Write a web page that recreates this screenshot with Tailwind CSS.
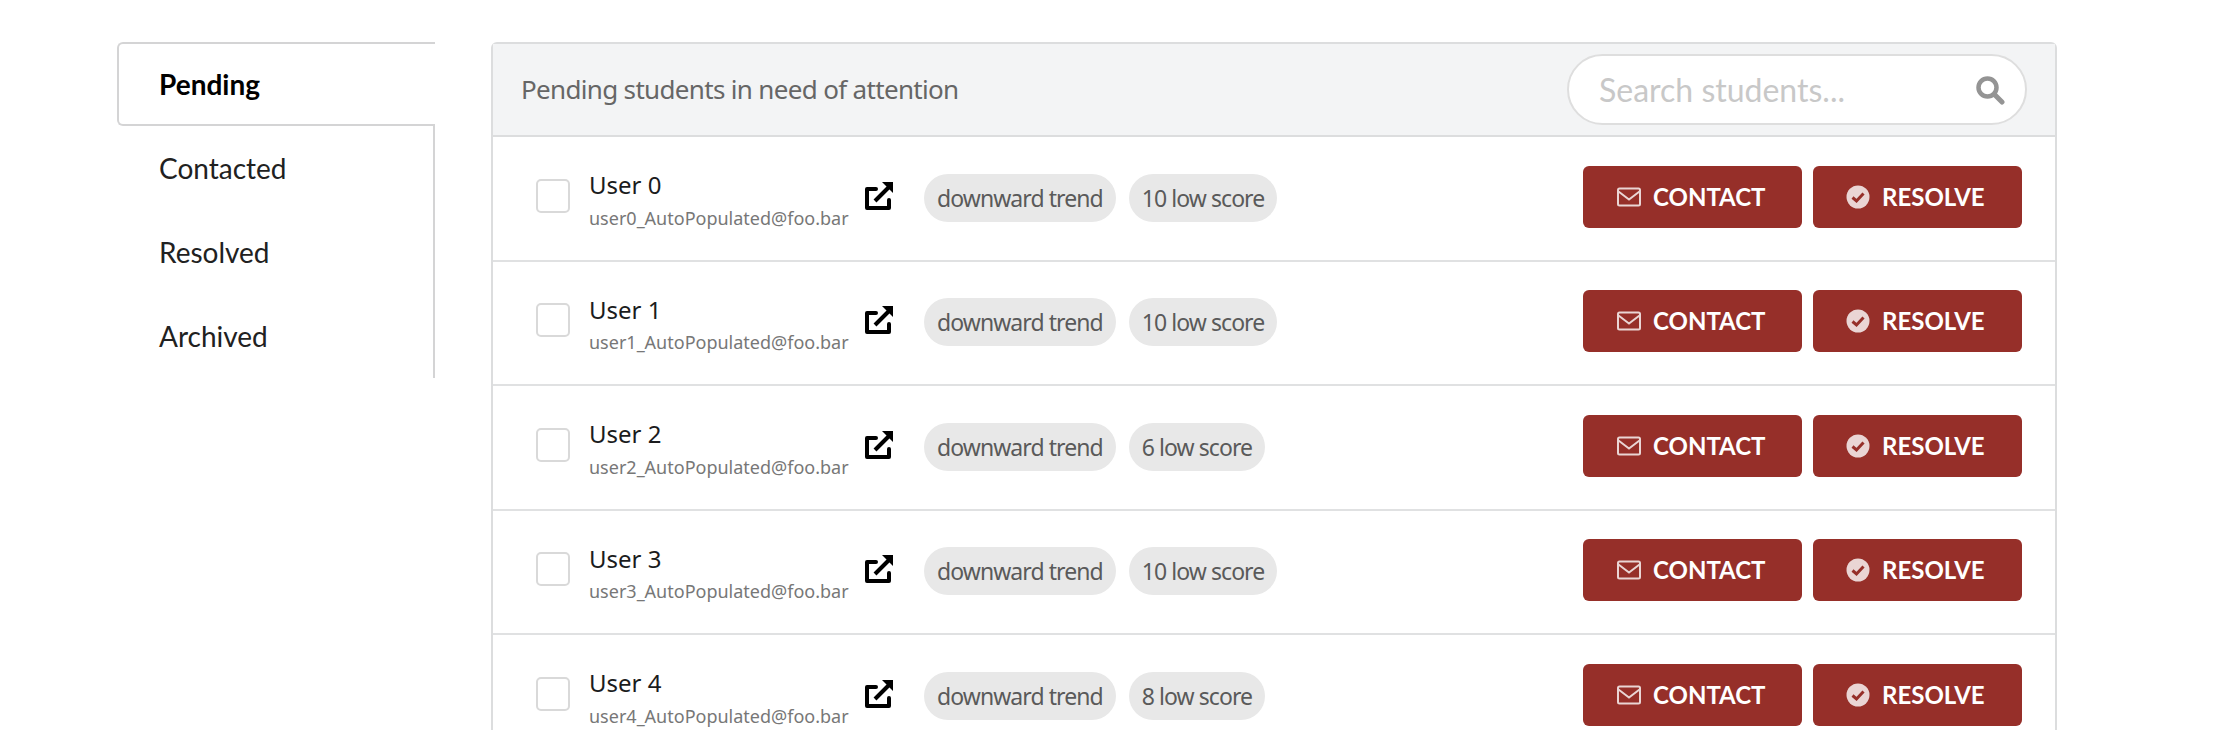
<!DOCTYPE html>
<html lang="en">
<head>
  <meta charset="UTF-8" />
  <title>Students</title>
  <script src="https://cdn.jsdelivr.net/npm/@tailwindcss/browser@4"></script>
</head>
<body class="bg-white h-[730px] overflow-hidden font-['Noto_Sans',sans-serif]">
  <div class="flex items-start gap-[56px] pl-[117px] pt-[42px]">

    <!-- tabs -->
    <div class="w-[318px] shrink-0 font-['Lato',sans-serif] text-[28px] text-[#212121]">
      <div class="h-[84px] flex items-center pl-[40px] border-2 border-r-0 border-[#d4d4d5] rounded-l-[6px] font-bold text-black bg-white">Pending</div>
      <div class="border-r-2 border-[#d4d4d5]">
        <div class="h-[84px] flex items-center pl-[42px]">Contacted</div>
        <div class="h-[84px] flex items-center pl-[42px]">Resolved</div>
        <div class="h-[84px] flex items-center pl-[42px]">Archived</div>
      </div>
    </div>

    <!-- panel -->
    <div class="w-[1566px] shrink-0 border-2 border-[#dcddde] rounded-t-[6px]">
      <div class="h-[93px] flex items-center justify-between pl-[28px] pr-[28px] bg-[#f3f4f5] border-b-2 border-[#dcddde]">
        <span class="text-[26px] text-[#666] tracking-[-0.67px]">Pending students in need of attention</span>
        <div class="w-[460px] h-[71px] flex items-center justify-between pl-[30px] pr-[20px] bg-white border-2 border-[#dedede] rounded-full">
          <span class="font-['Lato',sans-serif] text-[32px] text-[#c8c8c8]">Search students...</span>
          <svg width="30" height="30" viewBox="0 0 30 30" fill="none" stroke="#949494"><circle cx="12.5" cy="12.5" r="9" stroke-width="4.5"/><path d="M19.5 19.5 L27 27" stroke-width="5" stroke-linecap="round"/></svg>
        </div>
      </div>

      <div class="h-[124.5px] flex items-center pl-[43px] pr-[33px] pb-[3px] border-b-2 border-[#e0e1e2]">
        <div class="w-[34px] h-[34px] mb-[2px] border-2 border-[#d9d9d9] rounded-[5px]"></div>
        <div class="w-[294px] pl-[19px] mt-[4.5px]">
          <div class="text-[24px] leading-[34px] text-[#1b1c1d] mb-[3.5px]">User 0</div>
          <div class="text-[18px] leading-[24px] text-[#777] whitespace-nowrap">user0_AutoPopulated@foo.bar</div>
        </div>
        <svg class="w-[30px] h-[30px] mr-[30px] mb-[2px]" viewBox="0 0 30 30" fill="none" stroke="black" stroke-width="4"><path d="M12 8 H3 V27 H25 V19" stroke-linejoin="round" stroke-linecap="round"/><path d="M11 20 L25 6"/><path d="M18 1 H29 V12 Z" fill="black" stroke="none"/></svg>
        <span class="h-[48px] mt-[2px] flex items-center px-[13px] mr-[13px] rounded-full bg-[#e8e8e8] text-[23px] text-[#5a5a5a] tracking-[-0.93px]">downward trend</span>
        <span class="h-[48px] mt-[2px] flex items-center px-[13px] rounded-full bg-[#e8e8e8] text-[23px] text-[#5a5a5a] tracking-[-0.93px]">10 low score</span>
        <div class="ml-auto flex gap-[11px] font-['Lato',sans-serif] font-bold text-[24px] text-white">
          <button class="w-[219px] h-[62px] flex items-center justify-start pl-[34px] gap-[12px] rounded-[6px] bg-[#962f29]">
            <svg class="opacity-80" width="24" height="20" viewBox="0 0 24 20" fill="none" stroke="white" stroke-width="2"><rect x="1" y="1.5" width="22" height="17" rx="1.5"/><path d="M1.5 4.5 L12 12.5 L22.5 4.5"/></svg>
            CONTACT
          </button>
          <button class="w-[209px] h-[62px] flex items-center justify-start pl-[33px] gap-[12px] rounded-[6px] bg-[#962f29]">
            <svg class="opacity-80" width="24" height="24" viewBox="0 0 24 24"><circle cx="12" cy="12" r="11.5" fill="white"/><path d="M6.5 12.5 L10.5 16 L17.5 8.5" fill="none" stroke="#962f29" stroke-width="3"/></svg>
            RESOLVE
          </button>
        </div>
      </div>

      <div class="h-[124.5px] flex items-center pl-[43px] pr-[33px] pb-[3px] border-b-2 border-[#e0e1e2]">
        <div class="w-[34px] h-[34px] mb-[2px] border-2 border-[#d9d9d9] rounded-[5px]"></div>
        <div class="w-[294px] pl-[19px] mt-[4.5px]">
          <div class="text-[24px] leading-[34px] text-[#1b1c1d] mb-[3.5px]">User 1</div>
          <div class="text-[18px] leading-[24px] text-[#777] whitespace-nowrap">user1_AutoPopulated@foo.bar</div>
        </div>
        <svg class="w-[30px] h-[30px] mr-[30px] mb-[2px]" viewBox="0 0 30 30" fill="none" stroke="black" stroke-width="4"><path d="M12 8 H3 V27 H25 V19" stroke-linejoin="round" stroke-linecap="round"/><path d="M11 20 L25 6"/><path d="M18 1 H29 V12 Z" fill="black" stroke="none"/></svg>
        <span class="h-[48px] mt-[2px] flex items-center px-[13px] mr-[13px] rounded-full bg-[#e8e8e8] text-[23px] text-[#5a5a5a] tracking-[-0.93px]">downward trend</span>
        <span class="h-[48px] mt-[2px] flex items-center px-[13px] rounded-full bg-[#e8e8e8] text-[23px] text-[#5a5a5a] tracking-[-0.93px]">10 low score</span>
        <div class="ml-auto flex gap-[11px] font-['Lato',sans-serif] font-bold text-[24px] text-white">
          <button class="w-[219px] h-[62px] flex items-center justify-start pl-[34px] gap-[12px] rounded-[6px] bg-[#962f29]">
            <svg class="opacity-80" width="24" height="20" viewBox="0 0 24 20" fill="none" stroke="white" stroke-width="2"><rect x="1" y="1.5" width="22" height="17" rx="1.5"/><path d="M1.5 4.5 L12 12.5 L22.5 4.5"/></svg>
            CONTACT
          </button>
          <button class="w-[209px] h-[62px] flex items-center justify-start pl-[33px] gap-[12px] rounded-[6px] bg-[#962f29]">
            <svg class="opacity-80" width="24" height="24" viewBox="0 0 24 24"><circle cx="12" cy="12" r="11.5" fill="white"/><path d="M6.5 12.5 L10.5 16 L17.5 8.5" fill="none" stroke="#962f29" stroke-width="3"/></svg>
            RESOLVE
          </button>
        </div>
      </div>

      <div class="h-[124.5px] flex items-center pl-[43px] pr-[33px] pb-[3px] border-b-2 border-[#e0e1e2]">
        <div class="w-[34px] h-[34px] mb-[2px] border-2 border-[#d9d9d9] rounded-[5px]"></div>
        <div class="w-[294px] pl-[19px] mt-[4.5px]">
          <div class="text-[24px] leading-[34px] text-[#1b1c1d] mb-[3.5px]">User 2</div>
          <div class="text-[18px] leading-[24px] text-[#777] whitespace-nowrap">user2_AutoPopulated@foo.bar</div>
        </div>
        <svg class="w-[30px] h-[30px] mr-[30px] mb-[2px]" viewBox="0 0 30 30" fill="none" stroke="black" stroke-width="4"><path d="M12 8 H3 V27 H25 V19" stroke-linejoin="round" stroke-linecap="round"/><path d="M11 20 L25 6"/><path d="M18 1 H29 V12 Z" fill="black" stroke="none"/></svg>
        <span class="h-[48px] mt-[2px] flex items-center px-[13px] mr-[13px] rounded-full bg-[#e8e8e8] text-[23px] text-[#5a5a5a] tracking-[-0.93px]">downward trend</span>
        <span class="h-[48px] mt-[2px] flex items-center px-[13px] rounded-full bg-[#e8e8e8] text-[23px] text-[#5a5a5a] tracking-[-0.93px]">6 low score</span>
        <div class="ml-auto flex gap-[11px] font-['Lato',sans-serif] font-bold text-[24px] text-white">
          <button class="w-[219px] h-[62px] flex items-center justify-start pl-[34px] gap-[12px] rounded-[6px] bg-[#962f29]">
            <svg class="opacity-80" width="24" height="20" viewBox="0 0 24 20" fill="none" stroke="white" stroke-width="2"><rect x="1" y="1.5" width="22" height="17" rx="1.5"/><path d="M1.5 4.5 L12 12.5 L22.5 4.5"/></svg>
            CONTACT
          </button>
          <button class="w-[209px] h-[62px] flex items-center justify-start pl-[33px] gap-[12px] rounded-[6px] bg-[#962f29]">
            <svg class="opacity-80" width="24" height="24" viewBox="0 0 24 24"><circle cx="12" cy="12" r="11.5" fill="white"/><path d="M6.5 12.5 L10.5 16 L17.5 8.5" fill="none" stroke="#962f29" stroke-width="3"/></svg>
            RESOLVE
          </button>
        </div>
      </div>

      <div class="h-[124.5px] flex items-center pl-[43px] pr-[33px] pb-[3px] border-b-2 border-[#e0e1e2]">
        <div class="w-[34px] h-[34px] mb-[2px] border-2 border-[#d9d9d9] rounded-[5px]"></div>
        <div class="w-[294px] pl-[19px] mt-[4.5px]">
          <div class="text-[24px] leading-[34px] text-[#1b1c1d] mb-[3.5px]">User 3</div>
          <div class="text-[18px] leading-[24px] text-[#777] whitespace-nowrap">user3_AutoPopulated@foo.bar</div>
        </div>
        <svg class="w-[30px] h-[30px] mr-[30px] mb-[2px]" viewBox="0 0 30 30" fill="none" stroke="black" stroke-width="4"><path d="M12 8 H3 V27 H25 V19" stroke-linejoin="round" stroke-linecap="round"/><path d="M11 20 L25 6"/><path d="M18 1 H29 V12 Z" fill="black" stroke="none"/></svg>
        <span class="h-[48px] mt-[2px] flex items-center px-[13px] mr-[13px] rounded-full bg-[#e8e8e8] text-[23px] text-[#5a5a5a] tracking-[-0.93px]">downward trend</span>
        <span class="h-[48px] mt-[2px] flex items-center px-[13px] rounded-full bg-[#e8e8e8] text-[23px] text-[#5a5a5a] tracking-[-0.93px]">10 low score</span>
        <div class="ml-auto flex gap-[11px] font-['Lato',sans-serif] font-bold text-[24px] text-white">
          <button class="w-[219px] h-[62px] flex items-center justify-start pl-[34px] gap-[12px] rounded-[6px] bg-[#962f29]">
            <svg class="opacity-80" width="24" height="20" viewBox="0 0 24 20" fill="none" stroke="white" stroke-width="2"><rect x="1" y="1.5" width="22" height="17" rx="1.5"/><path d="M1.5 4.5 L12 12.5 L22.5 4.5"/></svg>
            CONTACT
          </button>
          <button class="w-[209px] h-[62px] flex items-center justify-start pl-[33px] gap-[12px] rounded-[6px] bg-[#962f29]">
            <svg class="opacity-80" width="24" height="24" viewBox="0 0 24 24"><circle cx="12" cy="12" r="11.5" fill="white"/><path d="M6.5 12.5 L10.5 16 L17.5 8.5" fill="none" stroke="#962f29" stroke-width="3"/></svg>
            RESOLVE
          </button>
        </div>
      </div>

      <div class="h-[124.5px] flex items-center pl-[43px] pr-[33px] pb-[3px] border-b-2 border-[#e0e1e2]">
        <div class="w-[34px] h-[34px] mb-[2px] border-2 border-[#d9d9d9] rounded-[5px]"></div>
        <div class="w-[294px] pl-[19px] mt-[4.5px]">
          <div class="text-[24px] leading-[34px] text-[#1b1c1d] mb-[3.5px]">User 4</div>
          <div class="text-[18px] leading-[24px] text-[#777] whitespace-nowrap">user4_AutoPopulated@foo.bar</div>
        </div>
        <svg class="w-[30px] h-[30px] mr-[30px] mb-[2px]" viewBox="0 0 30 30" fill="none" stroke="black" stroke-width="4"><path d="M12 8 H3 V27 H25 V19" stroke-linejoin="round" stroke-linecap="round"/><path d="M11 20 L25 6"/><path d="M18 1 H29 V12 Z" fill="black" stroke="none"/></svg>
        <span class="h-[48px] mt-[2px] flex items-center px-[13px] mr-[13px] rounded-full bg-[#e8e8e8] text-[23px] text-[#5a5a5a] tracking-[-0.93px]">downward trend</span>
        <span class="h-[48px] mt-[2px] flex items-center px-[13px] rounded-full bg-[#e8e8e8] text-[23px] text-[#5a5a5a] tracking-[-0.93px]">8 low score</span>
        <div class="ml-auto flex gap-[11px] font-['Lato',sans-serif] font-bold text-[24px] text-white">
          <button class="w-[219px] h-[62px] flex items-center justify-start pl-[34px] gap-[12px] rounded-[6px] bg-[#962f29]">
            <svg class="opacity-80" width="24" height="20" viewBox="0 0 24 20" fill="none" stroke="white" stroke-width="2"><rect x="1" y="1.5" width="22" height="17" rx="1.5"/><path d="M1.5 4.5 L12 12.5 L22.5 4.5"/></svg>
            CONTACT
          </button>
          <button class="w-[209px] h-[62px] flex items-center justify-start pl-[33px] gap-[12px] rounded-[6px] bg-[#962f29]">
            <svg class="opacity-80" width="24" height="24" viewBox="0 0 24 24"><circle cx="12" cy="12" r="11.5" fill="white"/><path d="M6.5 12.5 L10.5 16 L17.5 8.5" fill="none" stroke="#962f29" stroke-width="3"/></svg>
            RESOLVE
          </button>
        </div>
      </div>
    </div>
  </div>
</body>
</html>
